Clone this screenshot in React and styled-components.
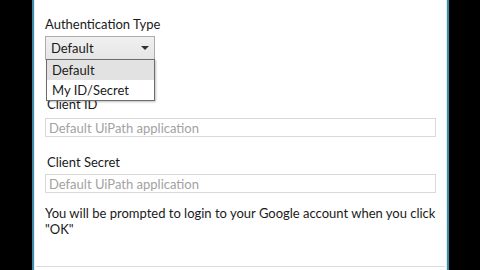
import React from 'react';
import styled, { createGlobalStyle } from 'styled-components';

const GlobalStyle = createGlobalStyle`
  html, body {
    margin: 0;
    padding: 0;
    background: #000;
    width: 480px;
    height: 270px;
    overflow: hidden;
  }
`;

const Screen = styled.div`
  display: flex;
  justify-content: flex-start;
  height: 270px;
  padding-left: 32px;
`;

const Window = styled.div`
  width: 413px;
  height: 270px;
  background: #fff;
  border-left: 2px solid #3f8aa6;
  border-right: 2px solid #3f8aa6;
  box-shadow: inset 1px 0 0 #dfeef2, inset -1px 0 0 #dfeef2;
  display: flex;
  flex-direction: column;
  font-family: "Lato", "Open Sans", sans-serif;
  font-size: 13px;
  color: #1a1a1a;
`;

const Body = styled.div`
  flex: 1;
  display: flex;
  flex-direction: column;
  padding: 15px 10px 0 11px;
`;

const Label = styled.div`
  height: 18px;
  line-height: 18px;
  padding-left: ${(p) => p.indent || 0}px;
  margin-top: ${(p) => p.top || 0}px;
  margin-bottom: ${(p) => p.gap || 0}px;
`;

const SelectWrap = styled.div`
  position: relative;
  width: 110px;
`;

const Select = styled.div`
  height: 22px;
  display: flex;
  align-items: center;
  justify-content: space-between;
  padding: 0 5px 0 5px;
  border: 1px solid #adadad;
  background: linear-gradient(#f0f0f0, #e5e5e5);
`;

const Caret = styled.span`
  width: 0;
  height: 0;
  border-left: 4px solid transparent;
  border-right: 4px solid transparent;
  border-top: 4px solid #333;
`;

const Menu = styled.div`
  position: absolute;
  left: 1px;
  top: 23px;
  width: 107px;
  background: #fff;
  border: 1px solid #6d6d6d;
  box-shadow: 1px 1px 2px rgba(0, 0, 0, 0.25);
  z-index: 2;
`;

const Option = styled.div`
  height: 20px;
  line-height: 20px;
  padding-left: 5px;
  background: ${(p) => (p.active ? '#e2e2e2' : '#fff')};
`;

const Field = styled.div`
  height: 17px;
  border: 1px solid #d9d9d9;
  display: flex;
  align-items: center;
  padding-left: 3px;
  color: #a2a2a2;
  width: 386px;
`;

const Note = styled.p`
  margin: 12px 0 0 0;
  line-height: 16px;
  width: 400px;
`;

const Footer = styled.div`
  height: 3px;
  border-top: 1px solid #dcdcdc;
  margin: 0 2px;
`;

export default function App() {
  return (
    <>
      <GlobalStyle />
      <Screen>
        <Window>
          <Body>
            <Label gap={3}>Authentication Type</Label>
            <SelectWrap>
              <Select>
                <span>Default</span>
                <Caret />
              </Select>
              <Menu>
                <Option active>Default</Option>
                <Option>My ID/Secret</Option>
              </Menu>
            </SelectWrap>
            <Label indent={2} top={35} gap={5}>Client ID</Label>
            <Field>Default UiPath application</Field>
            <Label indent={2} top={16} gap={3}>Client Secret</Label>
            <Field>Default UiPath application</Field>
            <Note>
              You will be prompted to login to your Google account when you click "OK"
            </Note>
          </Body>
          <Footer />
        </Window>
      </Screen>
    </>
  );
}
